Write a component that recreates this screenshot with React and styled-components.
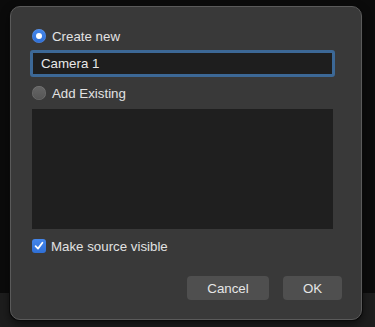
import React, { useState } from "react";
import styled, { createGlobalStyle } from "styled-components";

const GlobalStyle = createGlobalStyle`
  html, body {
    margin: 0;
    padding: 0;
    background: #0b0b0b;
  }
  body {
    font-family: "Liberation Sans", Arial, sans-serif;
  }
`;

const Screen = styled.div`
  position: relative;
  width: 375px;
  height: 327px;
  overflow: hidden;
  background: linear-gradient(
    to bottom,
    #0b0b0b 0px,
    #0b0b0b 293px,
    #1d1d1d 293px,
    #1d1d1d 327px
  );
  padding: 6px 0 0 10px;
  box-sizing: border-box;
`;

const Dialog = styled.div`
  width: 352px;
  height: 314px;
  box-sizing: border-box;
  background: #393939;
  border: 1px solid #5a5a5a;
  border-radius: 10px;
  box-shadow: 0 0 0 1px #0a0a0a, 0 4px 10px rgba(0, 0, 0, 0.6);
  padding: 22px 20px 0 21px;
  display: flex;
  flex-direction: column;
  color: #e2e2e2;
  font-size: 13.3px;
`;

const OptionRow = styled.label`
  display: flex;
  align-items: center;
  gap: 6px;
  height: 14px;
  cursor: default;
`;

const Radio = styled.span`
  width: 14px;
  height: 14px;
  border-radius: 50%;
  box-sizing: border-box;
  display: flex;
  align-items: center;
  justify-content: center;
  background: ${(p) =>
    p.checked
      ? "linear-gradient(#4587ec, #2f6fd6)"
      : "linear-gradient(#666666, #555555)"};
  box-shadow: inset 0 0 0 0.5px rgba(255, 255, 255, 0.15);

  &::after {
    content: "";
    display: ${(p) => (p.checked ? "block" : "none")};
    width: 6px;
    height: 6px;
    border-radius: 50%;
    background: #ffffff;
  }
`;

const NameInput = styled.input`
  margin: 7px 0 0 -2px;
  width: 305px;
  height: 27px;
  box-sizing: border-box;
  background: #1e1e1e;
  border: 3px solid #3c6896;
  border-radius: 3px;
  outline: none;
  color: #e8e8e8;
  font-family: "Liberation Sans", Arial, sans-serif;
  font-size: 13.3px;
  padding: 0 0 0 8px;
`;

const SecondRow = styled(OptionRow)`
  margin-top: 9px;
`;

const SourceList = styled.div`
  margin-top: 9px;
  width: 301px;
  height: 120px;
  background: #1f1f1f;
`;

const CheckRow = styled.label`
  display: flex;
  align-items: center;
  gap: 5px;
  margin-top: 10px;
  height: 14px;
`;

const CheckBox = styled.span`
  width: 14px;
  height: 14px;
  border-radius: 3px;
  background: linear-gradient(#4587ec, #2f6fd6);
  display: flex;
  align-items: center;
  justify-content: center;
`;

const ButtonBar = styled.div`
  display: flex;
  justify-content: flex-end;
  gap: 14px;
  margin-top: 23px;
  margin-right: -1px;
`;

const Button = styled.button`
  width: ${(p) => p.w}px;
  height: 24px;
  border: none;
  border-radius: 4px;
  background: #4f4f4f;
  color: #e6e6e6;
  font-family: "Liberation Sans", Arial, sans-serif;
  font-size: 13.3px;
  padding: 0;
`;

export default function App() {
  const [mode, setMode] = useState("new");
  const [name, setName] = useState("Camera 1");

  return (
    <Screen>
      <GlobalStyle />
      <Dialog>
        <OptionRow onClick={() => setMode("new")}>
          <Radio checked={mode === "new"} />
          Create new
        </OptionRow>
        <NameInput value={name} onChange={(e) => setName(e.target.value)} />
        <SecondRow onClick={() => setMode("existing")}>
          <Radio checked={mode === "existing"} />
          Add Existing
        </SecondRow>
        <SourceList />
        <CheckRow>
          <CheckBox>
            <svg width="10" height="10" viewBox="0 0 10 10">
              <path
                d="M1.6 5.2 L4 7.6 L8.4 1.8"
                fill="none"
                stroke="#ffffff"
                strokeWidth="1.8"
                strokeLinecap="round"
                strokeLinejoin="round"
              />
            </svg>
          </CheckBox>
          Make source visible
        </CheckRow>
        <ButtonBar>
          <Button w={82}>Cancel</Button>
          <Button w={59}>OK</Button>
        </ButtonBar>
      </Dialog>
    </Screen>
  );
}
